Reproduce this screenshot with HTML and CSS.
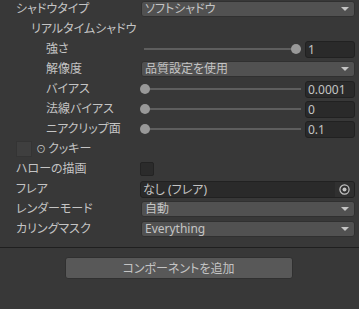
FILE: index.html
```html
<!DOCTYPE html>
<html lang="ja">
<head>
  <meta charset="UTF-8">
  <title>ライト インスペクター</title>
  <meta name="viewport" content="width=device-width, initial-scale=1.0">
  <link rel="stylesheet" href="styles.css">
</head>
<body>
  <div class="inspector">
    <div class="row">
      <span class="label">シャドウタイプ</span>
      <div class="dropdown">ソフトシャドウ</div>
    </div>
    <div class="row">
      <span class="label sub">リアルタイムシャドウ</span>
    </div>
    <div class="row">
      <span class="label subsub">強さ</span>
      <div class="slider-field">
        <div class="slider"><span class="knob" style="--v: 1"></span></div>
        <div class="num">1</div>
      </div>
    </div>
    <div class="row">
      <span class="label subsub">解像度</span>
      <div class="dropdown">品質設定を使用</div>
    </div>
    <div class="row">
      <span class="label subsub">バイアス</span>
      <div class="slider-field">
        <div class="slider"><span class="knob" style="--v: 0"></span></div>
        <div class="num">0.0001</div>
      </div>
    </div>
    <div class="row">
      <span class="label subsub">法線バイアス</span>
      <div class="slider-field">
        <div class="slider"><span class="knob" style="--v: 0"></span></div>
        <div class="num">0</div>
      </div>
    </div>
    <div class="row">
      <span class="label subsub">ニアクリップ面</span>
      <div class="slider-field">
        <div class="slider"><span class="knob" style="--v: 0"></span></div>
        <div class="num">0.1</div>
      </div>
    </div>
    <div class="row">
      <span class="label cookie"><span class="thumb"></span><span class="ring">⊙</span>クッキー</span>
    </div>
    <div class="row">
      <span class="label">ハローの描画</span>
      <span class="checkbox"></span>
    </div>
    <div class="row">
      <span class="label">フレア</span>
      <div class="object-field">
        <span class="object-name">なし (フレア)</span>
        <span class="picker">
          <svg width="11" height="11" viewBox="0 0 11 11">
            <circle cx="5.5" cy="5.5" r="4.6" fill="none" stroke="#c4c4c4" stroke-width="1.2"/>
            <circle cx="5.5" cy="5.5" r="2" fill="#c4c4c4"/>
          </svg>
        </span>
      </div>
    </div>
    <div class="row">
      <span class="label">レンダーモード</span>
      <div class="dropdown">自動</div>
    </div>
    <div class="row">
      <span class="label">カリングマスク</span>
      <div class="dropdown">Everything</div>
    </div>
  </div>
  <div class="separator"></div>
  <div class="footer">
    <button class="add-btn">コンポーネントを追加</button>
  </div>
</body>
</html>
```

FILE: styles.css
```css
body {
  background: #383838;
  color: #c4c4c4;
  font-family: 'Noto Sans', 'Noto Sans CJK JP', sans-serif;
  font-size: 12px;
  font-feature-settings: "palt";
  margin: 0;
}
.inspector {
  display: flex;
  flex-direction: column;
  gap: 2px;
  padding: 0 4px 0 16px;
}
.row {
  display: grid;
  grid-template-columns: 124px 1fr;
  align-items: center;
  height: 18px;
}
.label {
  white-space: nowrap;
  line-height: 18px;
}
.label.sub {
  padding-left: 15px;
}
.label.subsub {
  padding-left: 30px;
}
.dropdown {
  display: flex;
  align-items: center;
  justify-content: space-between;
  height: 16px;
  margin-left: 1px;
  padding: 0 5px 0 3px;
  box-sizing: border-box;
  background: #515151;
  border: 1px solid #303030;
  border-radius: 3px;
  line-height: 14px;
}
.dropdown::after {
  content: "";
  border-left: 4px solid transparent;
  border-right: 4px solid transparent;
  border-top: 4px solid #c4c4c4;
}
.slider-field {
  display: flex;
  align-items: center;
  gap: 4px;
}
.slider {
  position: relative;
  flex: 1;
  height: 18px;
}
.slider::before {
  content: "";
  position: absolute;
  left: 4px;
  right: 0;
  top: 8px;
  height: 2px;
  background: #5e5e5e;
}
.knob {
  position: absolute;
  top: 4px;
  left: calc((100% - 10px) * var(--v));
  width: 10px;
  height: 10px;
  border-radius: 50%;
  background: #999;
}
.num {
  width: 50px;
  height: 17px;
  box-sizing: border-box;
  padding: 0 2px;
  background: #2a2a2a;
  border: 1px solid #212121;
  border-radius: 3px;
  line-height: 15px;
}
.cookie {
  display: flex;
  align-items: center;
}
.thumb {
  width: 16px;
  height: 16px;
  box-sizing: border-box;
  background: #3f3f3f;
  border: 1px solid #343434;
  margin-right: 4px;
}
.ring {
  font-size: 10px;
  margin-right: 2px;
}
.checkbox {
  width: 14px;
  height: 14px;
  box-sizing: border-box;
  background: #2b2b2b;
  border: 1px solid #232323;
  border-radius: 2px;
}
.object-field {
  display: flex;
  align-items: center;
  height: 17px;
  box-sizing: border-box;
  background: #2a2a2a;
  border: 1px solid #212121;
  border-radius: 3px;
  line-height: 15px;
}
.object-name {
  flex: 1;
  padding-left: 2px;
}
.picker {
  display: flex;
  align-items: center;
  justify-content: center;
  width: 19px;
  height: 15px;
  background: #303030;
  border-radius: 0 2px 2px 0;
}
.separator {
  height: 1px;
  margin-top: 9px;
  background: #1f1f1f;
}
.footer {
  display: flex;
  justify-content: center;
  padding-top: 9px;
}
.add-btn {
  width: 228px;
  height: 22px;
  margin-right: 2px;
  padding: 0;
  background: #585858;
  border: 1px solid #303030;
  border-radius: 3px;
  color: #c4c4c4;
  font: inherit;
  font-feature-settings: "palt";
}
```
